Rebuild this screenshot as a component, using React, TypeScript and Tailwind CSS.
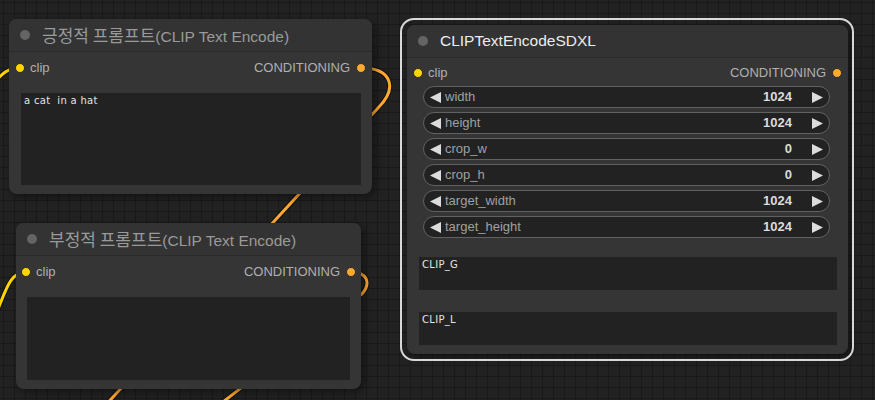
import React from "react";

const sans = "font-['Liberation_Sans','Noto_Sans_CJK_KR',sans-serif]";

const widgets = [
  { label: "width", value: "1024" },
  { label: "height", value: "1024" },
  { label: "crop_w", value: "0" },
  { label: "crop_h", value: "0" },
  { label: "target_width", value: "1024" },
  { label: "target_height", value: "1024" },
];

const Arrow = ({ dir }: { dir: "l" | "r" }) => (
  <svg width="11" height="11" viewBox="0 0 11 11" className="shrink-0">
    {dir === "l" ? (
      <polygon points="11,0 11,11 0,5.5" fill="#dcdcdc" />
    ) : (
      <polygon points="0,0 0,11 11,5.5" fill="#dcdcdc" />
    )}
  </svg>
);

const SlotRow = ({ className }: { className: string }) => (
  <div className={`flex items-center h-[20px] ${className}`}>
    <span className="w-[10px] h-[10px] rounded-full bg-[#ffd500] border border-[#2a2a2a] shrink-0" />
    <span className="ml-[5px] text-[13px] text-[#b0b0b0]">clip</span>
    <span className="ml-auto text-[13px] text-[#b0b0b0]">CONDITIONING</span>
    <span className="ml-[6px] w-[10px] h-[10px] rounded-full bg-[#ffa931] border border-[#2a2a2a] shrink-0" />
  </div>
);

const Title = ({ ko, text, bright }: { ko?: string; text: string; bright?: boolean }) => (
  <div className="h-[33px] flex items-center pl-[11px] bg-[#333333] border-b border-[#2b2b2b] rounded-t-[8px]">
    <span className="w-[10px] h-[10px] rounded-full bg-[#646464] shrink-0" />
    <span
      className={`ml-[12px] text-[15.5px] whitespace-nowrap ${
        bright ? "text-[#ececec]" : "text-[#9a9a9a]"
      }`}
    >
      {ko && <span className="text-[17px] font-['Noto_Sans_CJK_KR',sans-serif]">{ko}</span>}
      {text}
    </span>
  </div>
);

const TextBox = ({ className, text }: { className: string; text?: string }) => (
  <div
    className={`bg-[#222222] pl-[3px] pt-[1px] text-[10px] leading-[14px] tracking-[0.3px] text-[#e4e4e4] font-['DejaVu_Sans',sans-serif] whitespace-pre ${className}`}
  >
    {text}
  </div>
);

export default function App() {
  return (
    <div
      className={`relative w-[875px] h-[400px] overflow-hidden bg-[#222222] bg-[linear-gradient(to_right,#1a1a1a_1px,transparent_1px),linear-gradient(to_bottom,#1a1a1a_1px,transparent_1px)] bg-[size:11px_11px] bg-[position:3px_2px] ${sans}`}
    >
      {/* links */}
      <svg className="absolute inset-0" width="875" height="400">
        <g fill="none" strokeLinecap="round">
          <path d="M361,68 C392,68 398,88 378,108 L 92,420" stroke="#111" strokeWidth="5" />
          <path d="M361,68 C392,68 398,88 378,108 L 92,420" stroke="#ffa931" strokeWidth="3" />
          <path d="M351,272 C366,272 372,282 362,294 L 210,412" stroke="#111" strokeWidth="5" />
          <path d="M351,272 C366,272 372,282 362,294 L 210,412" stroke="#ffa931" strokeWidth="3" />
          <path d="M-10,86 C4,72 8,68 20,68" stroke="#111" strokeWidth="5" />
          <path d="M-10,86 C4,72 8,68 20,68" stroke="#ffd500" strokeWidth="3" />
          <path d="M-4,314 C6,290 10,272 26,272" stroke="#111" strokeWidth="5" />
          <path d="M-4,314 C6,290 10,272 26,272" stroke="#ffd500" strokeWidth="3" />
        </g>
      </svg>

      {/* positive prompt */}
      <div className="absolute left-[9px] top-[19px] w-[363px] h-[175px] rounded-[8px] bg-[#353535] shadow-[3px_3px_8px_rgba(0,0,0,0.45)] flex flex-col">
        <Title ko="긍정적 프롬프트" text="(CLIP Text Encode)" />
        <SlotRow className="mt-[6px] pl-[6px] pr-[6px]" />
        <TextBox className="mt-[15px] ml-[12px] mr-[11px] h-[92px]" text="a cat  in a hat" />
      </div>

      {/* negative prompt */}
      <div className="absolute left-[16px] top-[223px] w-[345px] h-[166px] rounded-[8px] bg-[#353535] shadow-[3px_3px_8px_rgba(0,0,0,0.45)] flex flex-col">
        <Title ko="부정적 프롬프트" text="(CLIP Text Encode)" />
        <SlotRow className="mt-[6px] pl-[5px] pr-[5px]" />
        <TextBox className="mt-[15px] ml-[11px] mr-[11px] h-[83px]" />
      </div>

      {/* SDXL node (selected) */}
      <div className="absolute left-[407px] top-[25px] w-[441px] h-[329px] rounded-[8px] bg-[#353535] shadow-[3px_3px_8px_rgba(0,0,0,0.45)] flex flex-col">
        <div className="absolute -left-[7px] -right-[6px] -top-[7px] -bottom-[7px] rounded-[14px] border-2 border-[#d8d8d8] pointer-events-none" />
        <Title text="CLIPTextEncodeSDXL" bright />
        <SlotRow className="mt-[5px] pl-[6px] pr-[6px]" />
        <div className="mt-[3px] ml-[16px] mr-[18px] flex flex-col gap-[4px]">
          {widgets.map((w) => (
            <div
              key={w.label}
              className="h-[22px] rounded-full bg-[#222222] border border-[#616161] flex items-center pl-[6px] pr-[6px]"
            >
              <Arrow dir="l" />
              <span className="ml-[4px] text-[13px] text-[#a0a0a0]">{w.label}</span>
              <span className="ml-auto text-[13px] font-bold text-[#dcdcdc]">{w.value}</span>
              <span className="ml-[20px]">
                <Arrow dir="r" />
              </span>
            </div>
          ))}
        </div>
        <TextBox className="mt-[19px] ml-[12px] mr-[11px] h-[33px]" text="CLIP_G" />
        <TextBox className="mt-[22px] ml-[12px] mr-[11px] h-[33px]" text="CLIP_L" />
      </div>
    </div>
  );
}
